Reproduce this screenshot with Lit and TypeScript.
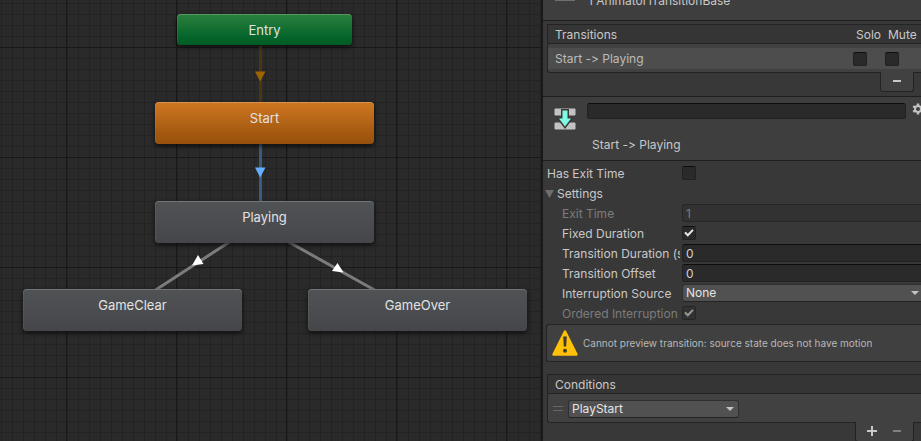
import { LitElement, html, css, svg } from "lit";
import { customElement, property } from "lit/decorators.js";
import { styleMap } from "lit/directives/style-map.js";

const minus = html`<svg width="10" height="10" viewBox="0 0 10 10" aria-hidden="true"><path d="M1 4h8v2H1z" fill="currentColor" /></svg>`;
const plus = html`<svg width="10" height="10" viewBox="0 0 10 10" aria-hidden="true"><path d="M0 4h4V0h2v4h4v2H6v4H4V6H0z" fill="currentColor" /></svg>`;

type Kind = "entry" | "default" | "state";
interface GraphNode { label: string; kind: Kind; x: number; y: number; }

const nodes: GraphNode[] = [
  { label: "Entry", kind: "entry", x: 177, y: 14 },
  { label: "Start", kind: "default", x: 155, y: 102 },
  { label: "Playing", kind: "state", x: 155, y: 201 },
  { label: "GameClear", kind: "state", x: 23, y: 289 },
  { label: "GameOver", kind: "state", x: 308, y: 289 },
];

const edges = [
  { d: "M260.500 30V120", line: "#4a370f", head: "255,71.500 265.500,71.500 260.200,81.500", fill: "#9c6500" },
  { d: "M260.500 120V220", line: "#3b5c82", head: "255,167.500 265.500,167.500 260.200,177.500", fill: "#66adff" },
  { d: "M260 222L128 308", line: "#7c7c7c", head: "198,255 203.500,264 192,265.500", fill: "#ffffff" },
  { d: "M253 222L412 311", line: "#7c7c7c", head: "337.500,263 332,271 343.500,272.500", fill: "#ffffff" },
];

@customElement("state-graph")
export class StateGraph extends LitElement {
  static styles = css`
    :host {
      display: block;
      position: relative;
      overflow: hidden;
      background-color: #2a2a2a;
      background-image:
        linear-gradient(90deg, #191919 1px, transparent 1px),
        linear-gradient(#191919 1px, transparent 1px),
        linear-gradient(90deg, #232323 1px, transparent 1px),
        linear-gradient(#232323 1px, transparent 1px);
      background-size: 110px 110px, 110px 110px, 11px 11px, 11px 11px;
      background-position: 66px 0, 0 47px, 1px 0, 0 3px;
    }
    .edges { position: absolute; inset: 0; width: 100%; height: 100%; }
    .node {
      position: absolute;
      box-sizing: border-box;
      width: 219px;
      height: 42px;
      padding: 8px 0;
      border: 0;
      border-radius: 4px;
      font: 13px/16px Inter, "Liberation Sans", sans-serif;
      color: #e2e2e2;
      text-align: center;
      display: flex;
      justify-content: center;
      box-shadow: inset 0 1px 0 #ffffff33, inset 1px 0 0 #ffffff0f, 0 2px 5px #000000b0;
    }
    .entry { width: 175px; height: 31px; background: linear-gradient(#2b813e, #04642a 75%, #005c22); }
    .default { background: linear-gradient(#cf7722, #a3590f 75%, #97500d); }
    .state { background: linear-gradient(#505356, #454649); }
  `;
  render() {
    return html`
      <svg class="edges" aria-hidden="true">
        ${edges.map((e) => svg`<path d=${e.d} stroke=${e.line} stroke-width="3" fill="none" /><polygon points=${e.head} fill=${e.fill} />`)}
      </svg>
      ${nodes.map((n) => html`<button class="node ${n.kind}" style=${styleMap({ left: `${n.x}px`, top: `${n.y}px` })}>${n.label}</button>`)}
    `;
  }
}

const controls = css`
  :host { display: block; }
  * { box-sizing: border-box; }
  input, select, button { font: inherit; color: inherit; margin: 0; }
  .text {
    height: 18px;
    width: 100%;
    min-width: 0;
    padding: 0 3px;
    background: #2a2a2a;
    border: 1px solid #212121;
    border-top-color: #0d0d0d;
    border-radius: 3px;
    color: #d2d2d2;
    outline: none;
  }
  .check {
    appearance: none;
    display: block;
    flex: none;
    width: 14px;
    height: 14px;
    background: #2a2a2a;
    border: 1px solid #212121;
    border-top-color: #0d0d0d;
    border-radius: 2px;
  }
  .check:checked::before {
    content: "";
    display: block;
    width: 12px;
    height: 12px;
    background: #e8e8e8;
    clip-path: polygon(10% 50%, 23% 39%, 40% 57%, 77% 18%, 89% 29%, 40% 82%);
  }
  .select { display: grid; align-items: center; }
  .select > * { grid-area: 1 / 1; }
  .select select {
    appearance: none;
    width: 100%;
    height: 18px;
    padding: 0 3px;
    line-height: 16px;
    background: #515151;
    border: 1px solid #303030;
    border-bottom-color: #242424;
    border-radius: 3px;
    color: #e4e4e4;
  }
  .select svg { justify-self: end; margin-right: 5px; pointer-events: none; }
  .text:disabled, .check:disabled { background: #323232; border-color: #262626; color: #7c7c7c; }
  .check:disabled:checked::before { background: #989898; }
`;

const caret = html`<svg width="8" height="4" viewBox="0 0 8 4" aria-hidden="true"><path d="M0 0h8L4 4z" fill="#c4c4c4" /></svg>`;

@customElement("property-row")
export class PropertyRow extends LitElement {
  @property() label = "";
  @property() kind: "check" | "text" | "select" = "text";
  @property() value = "";
  @property({ type: Boolean }) nested = false;
  @property({ type: Boolean }) disabled = false;
  static styles = [controls, css`
    .row { display: grid; grid-template-columns: 135px minmax(0, 1fr); height: 18px; align-items: center; padding-left: 4px; }
    .label { overflow: hidden; white-space: nowrap; line-height: 16px; padding-top: 2px; margin-right: 2px; }
    .nested { padding-left: 15px; }
    .off { color: #7c7c7c; }
    .text, .select select { border-right: 0; border-radius: 3px 0 0 3px; }
    .select svg { margin-right: 2px; }
  `];
  private control() {
    if (this.kind === "check")
      return html`<input id="field" class="check" type="checkbox" ?checked=${this.value === "on"} ?disabled=${this.disabled} />`;
    if (this.kind === "select")
      return html`<div class="select"><select id="field"><option>${this.value}</option></select>${caret}</div>`;
    return html`<input id="field" class="text" type="text" .value=${this.value} ?disabled=${this.disabled} />`;
  }
  render() {
    return html`<div class="row">
      <label for="field" class="label ${this.nested ? "nested" : ""} ${this.disabled ? "off" : ""}">${this.label}</label>
      ${this.control()}
    </div>`;
  }
}

@customElement("transition-inspector")
export class TransitionInspector extends LitElement {
  static styles = [controls, css`
    :host { background: #383838; color: #c8c8c8; font: 12px/16px Inter, "Liberation Sans", sans-serif; font-variant-ligatures: none; overflow: hidden; }
    .title { display: flex; align-items: flex-end; gap: 13px; height: 21px; padding: 0 10px 11px 12px; background: #3e3e3e; border-bottom: 1px solid #1f1f1f; overflow: hidden; }
    .title-icon { align-self: flex-start; width: 20px; height: 1px; background: #707070; }
    .section { padding: 3px 0 4px 4px; }
    .line { border-bottom: 1px solid #1f1f1f; }
    .list { width: 100%; border-collapse: separate; border-spacing: 0; table-layout: fixed; }
    .list th { height: 20px; padding: 2px 0 0 3px; font-weight: 400; text-align: left; background: #353535; border: solid #232323; border-width: 1px 0; }
    .list th:first-child { border-left-width: 1px; padding-left: 7px; }
    .list td { height: 29px; padding: 4px 0 3px; background: #414141; border-bottom: 1px solid #232323; }
    .list td:first-child { border-left: 1px solid #232323; border-radius: 3px 0 0 3px; }
    .cell { display: flex; align-items: center; height: 21px; background: #4d4d4d; }
    .name { padding-left: 7px; color: #bcbcbc; }
    .col { width: 32px; }
    .rest { width: 36px; }
    .tools { display: flex; width: max-content; margin: -1px 7px 0 auto; position: relative; height: 20px; background: #414141; border: 1px solid #232323; border-top: 0; border-radius: 0 0 3px 3px; }
    .tool { display: grid; place-items: center; width: 32px; height: 19px; padding: 0 0 2px; border: 0; background: none; }
    .tool:disabled { color: #808080; }
    .pair .tool { width: 25px; }
    .pair { padding: 0 4px 0 3px; }
    .object { display: grid; grid-template-columns: 32px minmax(0, 1fr) 9px; column-gap: 6px; height: 64px; padding: 6px 0 0 6px; background: #3e3e3e; border-bottom: 1px solid #1f1f1f; overflow: hidden; }
    .object .text { height: 16px; }
    .object-icon { grid-row: span 2; margin: 4px 0 0 4px; }
    .caption { grid-column: 2; padding: 10px 0 0 5px; }
    .gear { width: 12px; height: 14px; padding: 0; border: 0; background: none; }
    .rows { display: grid; gap: 2px; padding-top: 3px; }
    .fold { display: flex; align-items: center; gap: 3px; height: 18px; padding: 2px 0 0 2px; border: 0; background: none; }
    .warning { display: flex; align-items: center; gap: 5px; height: 38px; margin: 2px 0 9px 3px; padding-left: 5px; background: #404040; border: 1px solid #232323; border-right: 0; border-radius: 3px 0 0 3px; font-size: 10px; color: #b8b8b8; white-space: nowrap; }
    .condition { display: flex; align-items: center; gap: 5px; height: 21px; padding-left: 5px; }
    .condition .select { width: 171px; }
    .grip { width: 10px; height: 5px; border: solid #666; border-width: 1px 0; }
  `];
  render() {
    return html`
      <header class="title"><span class="title-icon"></span><span>1 AnimatorTransitionBase</span></header>
      <section class="section line">
        <table class="list">
          <colgroup><col /><col class="col" /><col class="rest" /></colgroup>
          <thead><tr><th>Transitions</th><th>Solo</th><th>Mute</th></tr></thead>
          <tbody><tr>
            <td><div class="cell name">Start -&gt; Playing</div></td>
            <td><div class="cell"><input class="check" type="checkbox" aria-label="Solo" /></div></td>
            <td><div class="cell"><input class="check" type="checkbox" aria-label="Mute" /></div></td>
          </tr></tbody>
        </table>
        <div class="tools"><button class="tool" aria-label="Remove transition">${minus}</button></div>
      </section>
      <section class="object">
        <svg class="object-icon" width="24" height="24" viewBox="0 0 24 24" aria-hidden="true">
          <path d="M2 2h20v6H2zM2 16h20v6H2z" fill="#c2c2c2" stroke="#c2c2c2" stroke-linejoin="round" />
          <path d="M9.500 3.500h5v8h3.500L12 19.500l-6-8h3.500z" fill="#7ffbe4" stroke="#3a3a3a" stroke-width="3" paint-order="stroke" />
        </svg>
        <input class="text" type="text" aria-label="Transition name" />
        <button class="gear" aria-label="Options"><svg width="12" height="12" viewBox="0 0 12 12" aria-hidden="true">
          <circle cx="6" cy="6" r="3" fill="none" stroke="#c4c4c4" stroke-width="2" />
          <path d="M6 .500v2M6 9.500v2M1.200 3.200l1.800 1.100M9 7.700l1.800 1.100M1.200 8.800L3 7.700M9 4.300l1.800-1.100" stroke="#c4c4c4" stroke-width="2.400" />
        </svg></button>
        <div class="caption">Start -&gt; Playing</div>
      </section>
      <section class="rows">
        <property-row label="Has Exit Time" kind="check"></property-row>
        <button class="fold"><svg width="9" height="8" viewBox="0 0 9 8" aria-hidden="true"><path d="M0 0h9L4.500 8z" fill="#6e6e6e" /></svg>Settings</button>
        <property-row nested disabled label="Exit Time" value="1"></property-row>
        <property-row nested label="Fixed Duration" kind="check" value="on"></property-row>
        <property-row nested label="Transition Duration (s)" value="0"></property-row>
        <property-row nested label="Transition Offset" value="0"></property-row>
        <property-row nested label="Interruption Source" kind="select" value="None"></property-row>
        <property-row nested disabled label="Ordered Interruption" kind="check" value="on"></property-row>
      </section>
      <div class="warning" role="status">
        <svg width="26" height="26" viewBox="0 0 26 26" aria-hidden="true">
          <path d="M13 1.500L24.500 24.500H1.500z" fill="#ffc107" stroke="#ffc107" stroke-width="2.500" stroke-linejoin="round" />
          <path d="M11.200 6.500h3.600l-.6 10h-2.400z" fill="#3c3a33" /><circle cx="13" cy="20.800" r="2" fill="#3c3a33" />
        </svg>
        <span>Cannot preview transition: source state does not have motion</span>
      </div>
      <section class="section">
        <table class="list">
          <thead><tr><th>Conditions</th></tr></thead>
          <tbody><tr><td><div class="condition">
            <span class="grip"></span>
            <div class="select"><select aria-label="Condition parameter"><option>PlayStart</option></select>${caret}</div>
          </div></td></tr></tbody>
        </table>
        <div class="tools pair">
          <button class="tool" aria-label="Add condition">${plus}</button>
          <button class="tool" disabled aria-label="Remove condition">${minus}</button>
        </div>
      </section>
    `;
  }
}

@customElement("app-root")
export class AppRoot extends LitElement {
  static styles = css`
    :host { display: grid; grid-template-columns: minmax(0, 1fr) 380px; height: 100vh; overflow: hidden; }
    .inspector { border-left: 2px solid #191919; }
  `;
  render() {
    return html`<state-graph></state-graph><transition-inspector class="inspector"></transition-inspector>`;
  }
}
